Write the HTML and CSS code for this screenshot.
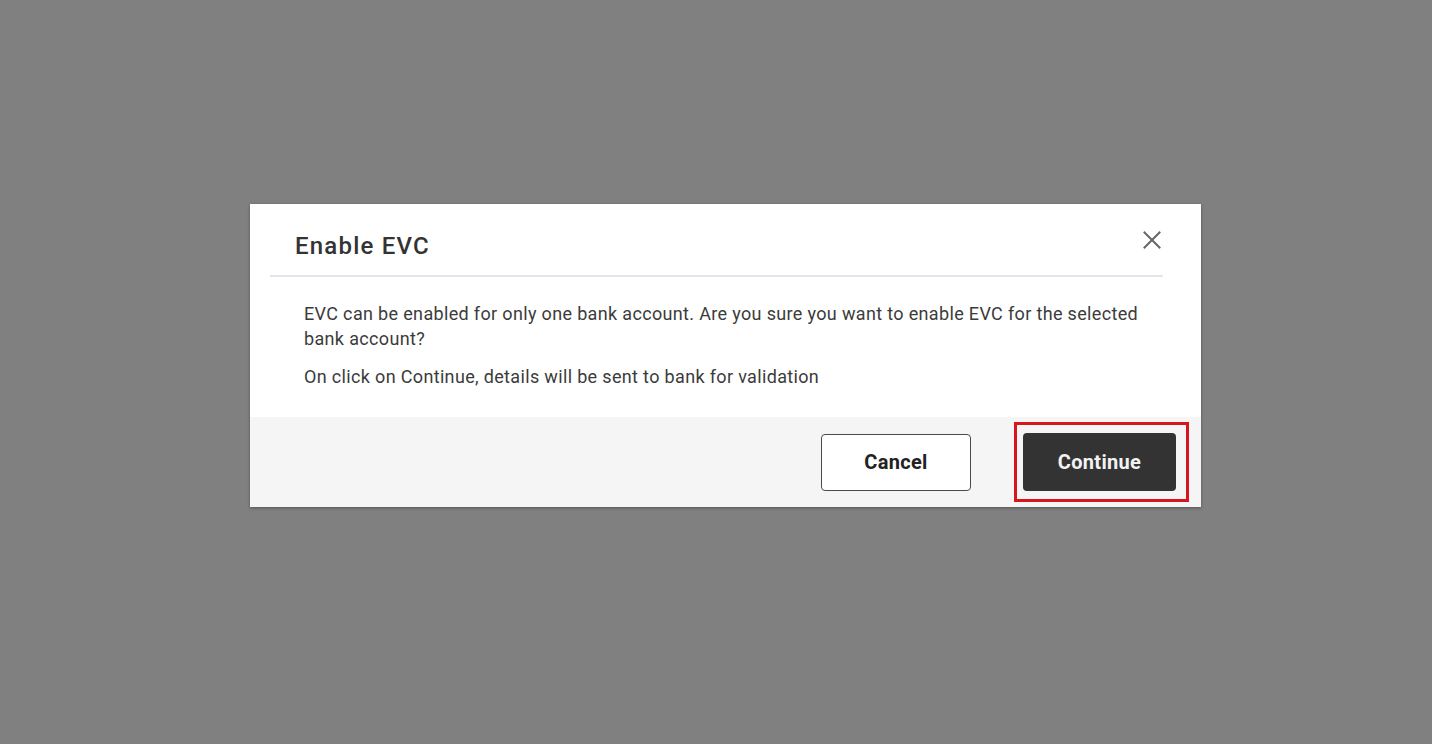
FILE: index.html
```html
<!DOCTYPE html>
<html lang="en">
<head>
<meta charset="utf-8">
<title>Enable EVC</title>
<link rel="stylesheet" href="styles.css">
</head>
<body>
<div class="dialog" role="dialog" aria-labelledby="dlg-title">
  <div class="dialog-header">
    <h2 class="dialog-title" id="dlg-title">Enable EVC</h2>
    <button class="close-btn" aria-label="Close">
      <svg width="18" height="18" viewBox="0 0 18 18" aria-hidden="true">
        <path d="M1.5 1.5 L16.5 16.5 M16.5 1.5 L1.5 16.5" stroke="#666" stroke-width="2" stroke-linecap="square" fill="none"/>
      </svg>
    </button>
  </div>
  <div class="dialog-body">
    <p class="msg">EVC can be enabled for only one bank account. Are you sure you want to enable EVC for the selected bank account?</p>
    <p class="msg msg-second">On click on Continue, details will be sent to bank for validation</p>
  </div>
  <div class="dialog-footer">
    <button class="btn btn-outline">Cancel</button>
    <span class="highlight">
      <button class="btn btn-dark">Continue</button>
    </span>
  </div>
</div>
</body>
</html>
```
FILE: styles.css
```css
* {
  box-sizing: border-box;
}

html, body {
  margin: 0;
  height: 100%;
}

body {
  background: #808080;
  font-family: Roboto, "Liberation Sans", Arial, sans-serif;
  padding: 204px 0 0 250px;
}

.dialog {
  width: 951px;
  background: #ffffff;
  box-shadow: 0 1px 3px rgba(0, 0, 0, 0.35);
}

.dialog-header {
  display: flex;
  justify-content: space-between;
  align-items: flex-start;
  margin: 0 38px 0 20px;
  padding: 28px 0 15px 25px;
  border-bottom: 2px solid #e4e4ec;
}

.dialog-title {
  margin: 0;
  font-size: 24px;
  line-height: 28px;
  font-weight: 500;
  letter-spacing: 1.2px;
  color: #333333;
}

.close-btn {
  margin: 0;
  padding: 0;
  width: 20px;
  height: 20px;
  border: none;
  background: transparent;
  display: flex;
  align-items: center;
  justify-content: center;
  margin-top: -2px;
  margin-right: 1px;
  cursor: pointer;
}

.dialog-body {
  padding: 24px 54px 28px 54px;
}

.msg {
  margin: 0;
  font-size: 18px;
  line-height: 25px;
  letter-spacing: 0.34px;
  color: #3b3b3b;
}

.msg-second {
  margin-top: 13px;
}

.dialog-footer {
  height: 90px;
  background: #f5f5f5;
  display: flex;
  align-items: center;
  justify-content: flex-end;
  gap: 43px;
  padding-right: 12px;
}

.btn {
  font-family: Roboto, "Liberation Sans", Arial, sans-serif;
  font-size: 20px;
  font-weight: 700;
  letter-spacing: 0.3px;
  border-radius: 4px;
  cursor: pointer;
  margin: 0;
}

.btn-outline {
  width: 150px;
  height: 57px;
  background: #ffffff;
  border: 1px solid #4a4a4a;
  color: #222222;
}

.btn-dark {
  width: 153px;
  height: 58px;
  background: #333333;
  border: none;
  color: #f2f2f2;
  display: block;
}

.highlight {
  display: block;
  border: 3px solid #d9141b;
  padding: 8px 10px 8px 6px;
}
```
